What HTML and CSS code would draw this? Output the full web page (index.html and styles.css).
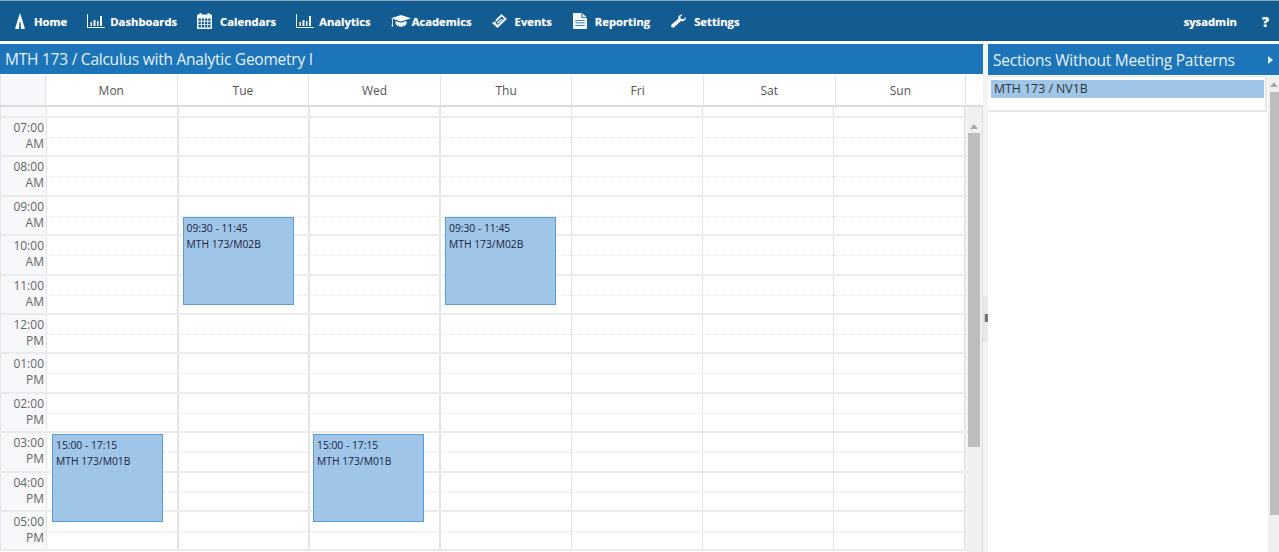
FILE: index.html
```html
<!DOCTYPE html>
<html lang="en">
<head>
<meta charset="utf-8">
<title>Calendar</title>
<link rel="stylesheet" href="styles.css">
</head>
<body>
<nav class="nav">
  <a class="nav-item"><svg class="ic ic-home" viewBox="0 0 10 16"><path d="M5 0 L7 6 L10 16 L6 16 L5.500 9 L4.500 9 L4 16 L0 16 L3 6Z" fill="#fff"/></svg><span>Home</span></a>
  <a class="nav-item"><svg class="ic ic-chart" viewBox="0 0 18 14"><path d="M0 0h1v13H18v1H0z M3.500 8h1.500v4h-1.500z M6.500 6h2v6h-2z M10 7h1.500v5H10z M13 2h2v10h-2z" fill="#f4f7fa"/></svg><span>Dashboards</span></a>
  <a class="nav-item"><svg class="ic ic-cal" viewBox="0 0 15 16"><path fill="#f4f7fa" fill-rule="evenodd" d="M2.500 0h2v1.500h6V0h2v1.500H15V16H0V1.500h2.500zM1.500 5.500v2.200h2.400V5.500zM4.800 5.500v2.200h2.300V5.500zM8 5.500v2.200h2.300V5.500zM11.200 5.500v2.200h2.300V5.500zM1.500 8.700v2.200h2.400V8.700zM4.800 8.700v2.200h2.300V8.700zM8 8.700v2.200h2.300V8.700zM11.200 8.700v2.200h2.300V8.700zM1.500 11.800v2.700h2.400v-2.700zM4.800 11.800v2.700h2.300v-2.700zM8 11.800v2.700h2.300v-2.700zM11.200 11.800v2.700h2.300v-2.700z"/></svg><span>Calendars</span></a>
  <a class="nav-item"><svg class="ic ic-chart2" viewBox="0 0 18 14"><path d="M0 0h1v13H18v1H0z M3.500 8h1.500v4h-1.500z M6.500 6h2v6h-2z M10 7h1.500v5H10z M13 2h2v10h-2z" fill="#f4f7fa"/></svg><span>Analytics</span></a>
  <a class="nav-item"><svg class="ic ic-cap" viewBox="0 0 20 12"><path d="M10 0 L20 3.200 L10 6.400 L0 3.200Z M4.500 6 L10 7.800 L15.500 6 V9 C13 12.500 7 12.500 4.500 9Z M1 4 L1.800 4.300 V9 L2.500 11.500 H0.500 L1 9Z" fill="#fff"/></svg><span>Academics</span></a>
  <a class="nav-item"><svg class="ic ic-ticket" viewBox="0 0 15 14"><path fill="#eef3f7" fill-rule="evenodd" d="M9.500 0 L15 5 L5.500 14 L0 9 L1.500 7.700 C3 8.500 4.300 7.200 3.500 5.800Z M9.600 2.600 L3.300 8.800 L5.500 11 L12 4.800Z"/><path fill="#eef3f7" d="M9.400 4.500 L10.400 5.400 L5.700 9.700 L4.800 8.800Z"/></svg><span>Events</span></a>
  <a class="nav-item"><svg class="ic ic-doc" viewBox="0 0 14 16"><path fill="#f4f7fa" fill-rule="evenodd" d="M0 0h8.500v5H14V16H0zM2.500 7v.8h9V7zM2.500 9.500v.8h9v-.8zM2.500 12v.8h9V12z"/><path fill="#f4f7fa" d="M9.500 0.300 L13.700 4.200 H9.500Z"/></svg><span>Reporting</span></a>
  <a class="nav-item"><svg class="ic ic-wrench" viewBox="0 0 16 14"><path fill="#fff" d="M15.800 3.100 C16.300 5.700 13.500 7.900 10.600 7 L3.600 13.400 C2.700 14.200 1.400 14.200 0.600 13.500 C-0.200 12.800 -0.200 11.600 0.700 10.800 L7.900 4.600 C7 2.200 9.500 -0.300 12.500 0.100 L9.900 2.400 L10.500 4.700 L13.100 5.200 Z"/></svg><span>Settings</span></a>
  <span class="nav-user">sysadmin</span>
  <span class="nav-help">?</span>
</nav>

<main class="layout">
  <section class="calendar">
    <h1 class="panel-title">MTH 173 / Calculus with Analytic Geometry I</h1>
    <div class="day-head">
      <div class="corner"></div>
      <div class="day">Mon</div><div class="day">Tue</div><div class="day">Wed</div><div class="day">Thu</div><div class="day">Fri</div><div class="day">Sat</div><div class="day">Sun</div>
    </div>
    <div class="cal-body">
      <div class="cal-scroll">
        <div class="hour lead"><div class="time"></div><div class="slots"></div></div>
        <div class="hour"><div class="time">07:00<br>AM</div><div class="slots"></div></div>
        <div class="hour"><div class="time">08:00<br>AM</div><div class="slots"></div></div>
        <div class="hour"><div class="time">09:00<br>AM</div><div class="slots"></div></div>
        <div class="hour"><div class="time">10:00<br>AM</div><div class="slots"></div></div>
        <div class="hour"><div class="time">11:00<br>AM</div><div class="slots"></div></div>
        <div class="hour"><div class="time">12:00<br>PM</div><div class="slots"></div></div>
        <div class="hour"><div class="time">01:00<br>PM</div><div class="slots"></div></div>
        <div class="hour"><div class="time">02:00<br>PM</div><div class="slots"></div></div>
        <div class="hour"><div class="time">03:00<br>PM</div><div class="slots"></div></div>
        <div class="hour"><div class="time">04:00<br>PM</div><div class="slots"></div></div>
        <div class="hour"><div class="time">05:00<br>PM</div><div class="slots"></div></div>
        <div class="event ev-tue">09:30 - 11:45<br>MTH 173/M02B</div>
        <div class="event ev-thu">09:30 - 11:45<br>MTH 173/M02B</div>
        <div class="event ev-mon">15:00 - 17:15<br>MTH 173/M01B</div>
        <div class="event ev-wed">15:00 - 17:15<br>MTH 173/M01B</div>
      </div>
      <div class="vbar vbar-cal"><i class="arrow"></i><b class="thumb"></b></div>
    </div>
  </section>

  <div class="splitter"><div class="handle"><i class="knob"></i></div></div>

  <aside class="side">
    <h2 class="panel-title side-title">Sections Without Meeting Patterns<i class="caret"></i></h2>
    <div class="side-body">
      <div class="side-main">
        <div class="list"><div class="list-item">MTH 173 / NV1B</div></div>
      </div>
      <div class="vbar vbar-side"><i class="arrow"></i><b class="thumb"></b></div>
    </div>
  </aside>
</main>
</body>
</html>
```
FILE: styles.css
```css
* { box-sizing: border-box; }
html, body { margin: 0; height: 100%; overflow: hidden; }
body { width: 1279px; height: 552px; background: #fff; font-family: "Open Sans", "Liberation Sans", sans-serif; color: #333; }

.nav { height: 41px; background: #135c91; border-top: 1px solid #8fa9bf; border-bottom: 1px solid #0f5486; display: flex; align-items: center; padding: 1px 9px 0 15px; gap: 20px; color: #fff; font-weight: 700; font-size: 11.25px; text-shadow: 0 0 1px rgba(255,255,255,.5); }
.nav-item { display: flex; align-items: center; gap: 6px; }
.ic { display: block; flex: none; }
.ic-home { width: 10px; height: 16px; margin-right: 3px; }
.ic-chart, .ic-chart2 { width: 18px; height: 14px; margin-right: -1px; }
.ic-cal { width: 15px; height: 16px; margin-right: 2px; }
.ic-cap { width: 20px; height: 12px; margin-right: -5px; }
.ic-ticket { width: 15px; height: 14px; margin-right: 2px; }
.ic-doc { width: 14px; height: 16px; margin: 0 2px 0 1px; }
.ic-wrench { width: 15px; height: 14px; margin: 0 2px 0 1px; }
.nav-user { margin-left: auto; }
.nav-help { font-size: 14px; font-weight: 800; margin-left: 5px; width: 8px; }

.layout { display: flex; height: 511px; }
.calendar { width: 983px; flex: none; display: flex; flex-direction: column; padding-top: 3px; }
.panel-title { margin: 0; height: 30px; line-height: 30px; background: #1b75b8; color: #e8f1f8; font-weight: 400; font-size: 15.500px; letter-spacing: -.24px; padding-left: 5px; white-space: nowrap; }

.day-head { display: flex; height: 33px; padding-top: 1px; border-bottom: 2px solid #dcdcdc; }
.corner { width: 45px; flex: none; background: #f7f8fc; border-left: 1px solid #e4e4e4; }
.day { width: 131.6px; flex: none; border-left: 1px solid #e4e4e4; text-align: center; font-size: 12px; line-height: 31px; color: #555; }
.day:last-child { border-right: 1px solid #e4e4e4; }

.cal-body { flex: 1; display: flex; min-height: 0; }
.cal-scroll { position: relative; width: 967px; flex: none; overflow: hidden; }
.hour { display: flex; height: 39.4px; border-bottom: 2px solid #ebebeb; }
.hour.lead { height: 11px; }
.lead .slots::after { display: none; }
.time { width: 46px; flex: none; background: #f7f8fc; border-left: 1px solid #e4e4e4; text-align: right; padding: 2px 2px 0 0; font-size: 12px; line-height: 16px; color: #666; }
.slots { flex: 1; background-image: repeating-linear-gradient(90deg, #e4e4e4 0 1.5px, transparent 1.5px 131.15px), linear-gradient(#fff, #fff); position: relative; }
.slots::after { content: ""; position: absolute; left: 0; right: 0; top: 19px; border-top: 1px dotted #e6e6e6; }

.event { position: absolute; width: 111px; height: 88px; background: #9fc5e8; border: 1px solid #5b9bd5; font-size: 10.3px; line-height: 16px; color: #1d2440; padding: 2px 3px; }
.ev-mon { left: 52px; top: 327px; }
.ev-tue { left: 182.5px; top: 110px; }
.ev-wed { left: 313px; top: 327px; }
.ev-thu { left: 445px; top: 110px; }

.vbar { flex: none; position: relative; background: #f0f0f0; }
.vbar-cal { width: 16px; border-right: 1px solid #dcdcdc; }
.vbar-side { width: 11px; }
.arrow { position: absolute; top: 17px; left: 3px; width: 0; height: 0; border: 4px solid transparent; border-top-width: 0; border-bottom: 5px solid #a8a8a8; }
.vbar-cal .thumb { position: absolute; left: 1px; right: 2px; top: 26px; height: 314px; background: #bdbdbd; }
.vbar-side .arrow { top: 7px; left: 2px; }
.vbar-side .thumb { position: absolute; left: 2px; right: 0; top: 17px; height: 423px; background: #bdbdbd; }

.splitter { width: 5px; flex: none; background: #f4f4f4; position: relative; }
.handle { position: absolute; left: 0; top: 255px; width: 5px; height: 46px; background: #e8e8e8; }
.knob { position: absolute; top: 18px; left: 1px; width: 4px; height: 8px; background: #6e7480; border-left: 1px solid #d8c894; }

.side { flex: 1; display: flex; flex-direction: column; padding-top: 3px; min-width: 0; }
.side-title { position: relative; height: 31px; line-height: 32px; }
.caret { position: absolute; right: 6px; top: 12px; width: 0; height: 0; border-style: solid; border-width: 4.500px 0 4.500px 5px; border-color: transparent transparent transparent #dfeaf4; }
.side-body { flex: 1; display: flex; min-height: 0; }
.side-main { flex: 1; min-width: 0; }
.list { height: 36px; margin: 1px 1px 0 0; padding: 3px 1px 0 3px; border: 1px solid #e6e6e6; border-width: 1px 2px 2px 1px; border-left: 0; }
.list-item { height: 18px; background: #9fc5e8; font-size: 12.3px; line-height: 17px; padding-left: 3px; color: #333; }
```
